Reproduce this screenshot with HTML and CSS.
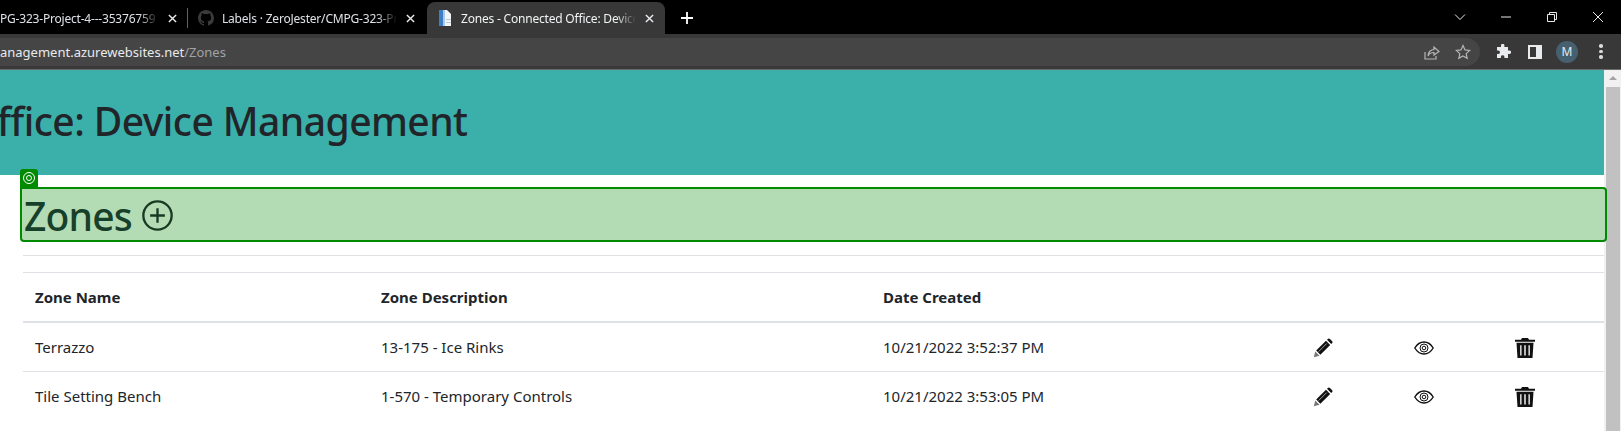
FILE: index.html
```html
<!DOCTYPE html>
<html lang="en">
<head>
  <meta charset="UTF-8" />
  <meta name="viewport" content="width=device-width, initial-scale=1.0" />
  <title>Zones - Connected Office: Device Management</title>
  <link rel="stylesheet" href="styles.css">
</head>
<body>
  <div class="tabstrip">
    <div class="tab tab-first">
      <span class="tab-title">PG-323-Project-4---35376759</span>
      <svg class="tab-x" viewBox="0 0 10 10"><path d="M1 1l8 8M9 1l-8 8"/></svg>
    </div>
    <div class="tab-sep"></div>
    <div class="tab tab-second">
      <svg class="favicon" viewBox="0 0 16 16"><path fill="#3a3a3a" d="M8 0C3.58 0 0 3.58 0 8c0 3.54 2.29 6.53 5.47 7.59.4.07.55-.17.55-.38v-1.34c-2.23.48-2.69-1.07-2.69-1.07-.36-.92-.89-1.17-.89-1.17-.73-.5.05-.49.05-.49.8.06 1.23.83 1.23.83.71 1.22 1.87.87 2.33.66.07-.52.28-.87.51-1.07-1.78-.2-3.64-.89-3.64-3.95 0-.87.31-1.59.82-2.15-.08-.2-.36-1.02.08-2.12 0 0 .67-.21 2.2.82A7.7 7.7 0 018 3.89c.68 0 1.36.09 2 .27 1.53-1.04 2.2-.82 2.2-.82.44 1.1.16 1.92.08 2.12.51.56.82 1.27.82 2.15 0 3.07-1.87 3.75-3.65 3.95.29.25.54.73.54 1.48v2.2c0 .21.15.46.55.38A8 8 0 0016 8c0-4.42-3.58-8-8-8z"/></svg>
      <span class="tab-title">Labels · ZeroJester/CMPG-323-Pr</span>
      <svg class="tab-x" viewBox="0 0 10 10"><path d="M1 1l8 8M9 1l-8 8"/></svg>
    </div>
    <div class="tab tab-active">
      <svg class="favicon" viewBox="0 0 16 16"><path fill="#f2f5f8" d="M2 0h8l4 4v12H2z"/><path fill="#3d7fc4" d="M2 0h4v16H2z"/><path fill="#a9c9e8" d="M6 0h2v16H6z"/><path fill="#c4c8cc" d="M9 9h5v1H9zM9 12h5v1H9z"/></svg>
      <span class="tab-title">Zones - Connected Office: Device</span>
      <svg class="tab-x" viewBox="0 0 10 10"><path d="M1 1l8 8M9 1l-8 8"/></svg>
    </div>
    <svg class="new-tab" viewBox="0 0 12 12"><path d="M6 0v12M0 6h12"/></svg>
    <div class="win-controls">
      <svg class="win-btn" viewBox="0 0 12 12"><path d="M1 3.500l5 5 5-5"/></svg>
      <svg class="win-btn" viewBox="0 0 12 12"><path d="M1 6h10"/></svg>
      <svg class="win-btn" viewBox="0 0 12 12"><path d="M1.500 3.500h7v7h-7zM3.500 3.500v-2h7v7h-2"/></svg>
      <svg class="win-btn" viewBox="0 0 12 12"><path d="M1 1l10 10M11 1L1 11"/></svg>
    </div>
  </div>

  <div class="toolbar">
    <div class="omnibox">
      <span class="url">anagement.azurewebsites.net<span class="url-path">/Zones</span></span>
      <svg class="omni-icon" viewBox="0 0 16 16"><path d="M1 8v7h11v-3M4 12c0-4 3-6.500 6-6.500V3l5 4.500L10 11V8.500c-3 0-5 1-6 3.500z"/></svg>
      <svg class="omni-icon" viewBox="0 0 16 16"><path d="M8 1.500l2 4.400 4.700.5-3.500 3.200 1 4.700L8 11.900l-4.200 2.400 1-4.700L1.300 6.400 6 5.900z"/></svg>
    </div>
    <svg class="tool-icon puzzle" viewBox="0 0 16 16"><path d="M6 1.500a1.700 1.700 0 013.400 0V3H13v3.500h1.300a1.800 1.800 0 010 3.600H13V14H9.400v-1.300a1.800 1.800 0 00-3.500 0V14H2v-3.900h1.200a1.800 1.800 0 000-3.600H2V3h4z"/></svg>
    <svg class="tool-icon panel" viewBox="0 0 14 14"><path fill-rule="evenodd" d="M0 0h14v14H0zM2 2v10h6V2z"/></svg>
    <div class="avatar">M</div>
    <div class="kebab"><i></i><i></i><i></i></div>
  </div>
  <div class="toolbar-edge"></div>

  <div class="viewport">
    <div class="page">
      <header class="site-header">
        <h1>ffice: Device Management</h1>
      </header>
      <main>
        <div class="highlight-wrap">
          <div class="highlight-tag">
            <svg viewBox="0 0 14 14"><circle cx="7" cy="7" r="5.500"/><circle cx="7" cy="7" r="2.500"/></svg>
          </div>
          <h2 class="highlight">Zones
            <svg class="add-icon" viewBox="0 0 16 16"><circle cx="8" cy="8" r="7.300"/><path d="M8 4.200v7.600M4.200 8h7.600"/></svg>
          </h2>
        </div>
        <hr>
        <table>
          <thead>
            <tr>
              <th class="col-name">Zone Name</th>
              <th class="col-desc">Zone Description</th>
              <th class="col-date">Date Created</th>
              <th class="col-act"></th>
              <th class="col-act"></th>
              <th></th>
            </tr>
          </thead>
          <tbody>
            <tr>
              <td>Terrazzo</td>
              <td>13-175 - Ice Rinks</td>
              <td>10/21/2022 3:52:37 PM</td>
              <td><svg class="act" viewBox="0 0 20 20"><path fill="#777" d="M.8 19.200l1.500-5.700 4.200 4.200z"/><path d="M3.200 12.600L13 2.800l4.200 4.200-9.800 9.800z"/><path d="M14 1.800l.8-.8a1.500 1.500 0 012.100 0l2.100 2.100a1.500 1.500 0 010 2.100l-.8.800z"/><path class="shine" d="M5.600 13.600l8-8"/></svg></td>
              <td><svg class="act eye" viewBox="0 0 20 14"><path class="eye-line" d="M.8 7C3 3.400 6.200 1 10 1s7 2.400 9.200 6C17 10.600 13.800 13 10 13S3 10.600.8 7z"/><circle class="eye-ring" cx="10" cy="7" r="4"/><circle class="eye-ring" cx="10" cy="7" r="1.800"/></svg></td>
              <td><svg class="act" viewBox="0 0 20 20"><path fill-rule="evenodd" d="M7 0h6l1 1.700h6v2H0v-2h6zM1.500 4.800h17L17.500 20h-15zM5.200 7.200v10.300h1.300V7.200zm4.100 0v10.300h1.400V7.200zm4.200 0v10.300h1.300V7.200z"/></svg></td>
            </tr>
            <tr>
              <td>Tile Setting Bench</td>
              <td>1-570 - Temporary Controls</td>
              <td>10/21/2022 3:53:05 PM</td>
              <td><svg class="act" viewBox="0 0 20 20"><path fill="#777" d="M.8 19.200l1.500-5.700 4.200 4.200z"/><path d="M3.200 12.600L13 2.800l4.200 4.200-9.800 9.800z"/><path d="M14 1.800l.8-.8a1.500 1.500 0 012.100 0l2.100 2.100a1.500 1.500 0 010 2.100l-.8.800z"/><path class="shine" d="M5.600 13.600l8-8"/></svg></td>
              <td><svg class="act eye" viewBox="0 0 20 14"><path class="eye-line" d="M.8 7C3 3.400 6.200 1 10 1s7 2.400 9.200 6C17 10.600 13.800 13 10 13S3 10.600.8 7z"/><circle class="eye-ring" cx="10" cy="7" r="4"/><circle class="eye-ring" cx="10" cy="7" r="1.800"/></svg></td>
              <td><svg class="act" viewBox="0 0 20 20"><path fill-rule="evenodd" d="M7 0h6l1 1.700h6v2H0v-2h6zM1.500 4.800h17L17.500 20h-15zM5.200 7.200v10.300h1.300V7.200zm4.100 0v10.300h1.400V7.200zm4.200 0v10.300h1.300V7.200z"/></svg></td>
            </tr>
          </tbody>
        </table>
      </main>
    </div>
    <div class="scrollbar">
      <div class="scroll-arrow"></div>
      <div class="scroll-thumb"></div>
    </div>
  </div>
</body>
</html>
```

FILE: styles.css
```css
* {
  box-sizing: border-box;
}
html, body {
  margin: 0;
  height: 431px;
  overflow: hidden;
}
body {
  font-family: "Noto Sans", "Open Sans", sans-serif;
  background: white;
  color: #212529;
}

/* browser chrome */
.tabstrip {
  height: 34px;
  background: black;
  display: flex;
  align-items: flex-end;
  color: #dee1e6;
  font-size: 12px;
  letter-spacing: -0.2px;
  overflow: hidden;
}
.tab {
  height: 32px;
  display: flex;
  align-items: center;
  flex: none;
}
.tab-first {
  width: 187px;
  padding-right: 10px;
}
.tab-second {
  width: 239px;
  padding: 0 12px 0 10px;
}
.tab-active {
  width: 238px;
  padding: 0 11px 0 10px;
  background: #383838;
  border-radius: 8px 8px 0 0;
  color: #f1f3f4;
}
.tab-sep {
  width: 1px;
  height: 20px;
  margin-bottom: 6px;
  background: #5f6368;
  flex: none;
}
.tab-title {
  flex: 1;
  min-width: 0;
  white-space: nowrap;
  overflow: hidden;
  -webkit-mask-image: linear-gradient(to left, transparent 0, black 20px);
  mask-image: linear-gradient(to left, transparent 0, black 20px);
}
.favicon {
  width: 16px;
  height: 16px;
  margin-right: 8px;
  flex: none;
}
.tab-x {
  width: 9px;
  height: 9px;
  margin-left: 9px;
  flex: none;
  fill: none;
  stroke: #e8eaed;
  stroke-width: 1.600;
}
.new-tab {
  width: 12px;
  height: 12px;
  margin: 0 0 10px 16px;
  flex: none;
  fill: none;
  stroke: white;
  stroke-width: 1.800;
}
.win-controls {
  margin-left: auto;
  height: 34px;
  display: flex;
  align-items: center;
  gap: 34px;
  padding-right: 17px;
}
.win-btn {
  width: 12px;
  height: 12px;
  fill: none;
  stroke: #e8e8e8;
  stroke-width: 1;
}

.toolbar {
  height: 35px;
  background: #383838;
  display: flex;
  align-items: center;
  padding-right: 16px;
}
.omnibox {
  width: 1480px;
  height: 28px;
  background: #454545;
  border-radius: 0 14px 14px 0;
  display: flex;
  align-items: center;
  padding-right: 9px;
  gap: 15px;
  flex: none;
}
.url {
  margin-right: auto;
  font-size: 13px;
  color: #e8eaed;
  white-space: nowrap;
}
.url-path {
  color: #a0a3a8;
}
.omni-icon {
  width: 16px;
  height: 16px;
  fill: none;
  stroke: #b5b5b5;
  stroke-width: 1.200;
}
.tool-icon {
  flex: none;
  fill: #e8eaed;
}
.puzzle {
  width: 16px;
  height: 16px;
  margin-left: 15px;
}
.panel {
  width: 14px;
  height: 14px;
  margin-left: 17px;
}
.avatar {
  width: 22px;
  height: 22px;
  margin-left: 14px;
  border-radius: 50%;
  background: #47606f;
  color: #e8eaed;
  font-size: 12px;
  display: flex;
  align-items: center;
  justify-content: center;
  flex: none;
}
.kebab {
  margin-left: 21px;
  display: flex;
  flex-direction: column;
  gap: 2px;
}
.kebab i {
  width: 3.500px;
  height: 3.500px;
  border-radius: 50%;
  background: #dcdcdc;
}
.toolbar-edge {
  height: 1px;
  background: #6a6a6a;
}

/* page */
.viewport {
  display: flex;
  height: 361px;
  overflow: hidden;
}
.page {
  flex: 1;
  min-width: 0;
}
.site-header {
  height: 105px;
  background: #3bafa9;
  display: flex;
  align-items: center;
  overflow: hidden;
}
.site-header h1 {
  margin: -4px 0 0 -3px;
  font-size: 39px;
  font-weight: 500;
  letter-spacing: -0.55px;
  white-space: nowrap;
  color: #212529;
}
main {
  padding: 12px 0 0 20px;
}
.highlight-wrap {
  position: relative;
  z-index: 1;
  width: 1587px;
}
.highlight-tag {
  position: absolute;
  left: 0;
  top: -18px;
  width: 18px;
  height: 18px;
  background: #008a00;
  border-radius: 3px 3px 0 0;
  display: flex;
  align-items: center;
  justify-content: center;
}
.highlight-tag svg {
  width: 14px;
  height: 14px;
  fill: none;
  stroke: white;
  stroke-width: 1;
}
.highlight {
  margin: 0;
  height: 55px;
  padding: 2px 0 0 2px;
  border: 2px solid #008a00;
  border-radius: 0 4px 4px 4px;
  background: #b4dcb4;
  color: #17402a;
  font-size: 39px;
  font-weight: 500;
  letter-spacing: -0.8px;
  line-height: 51px;
  display: flex;
  align-items: center;
  gap: 10px;
}
.add-icon {
  width: 31px;
  height: 31px;
  fill: none;
  stroke: #173a22;
  stroke-width: 1.200;
}
hr {
  margin: 13px 0 16px 3px;
  width: 1581px;
  border: 0;
  border-top: 1px solid #dfe1e5;
}
table {
  margin-left: 3px;
  width: 1581px;
  border-collapse: collapse;
  table-layout: fixed;
  font-size: 15px;
  border-top: 1px solid #dee2e6;
}
th {
  text-align: left;
  padding: 0 12px;
  height: 49px;
  font-weight: 700;
  border-bottom: 2px solid #dee2e6;
}
td {
  padding: 0 12px;
  height: 50px;
  border-bottom: 1px solid #dee2e6;
}
tbody tr:last-child td {
  height: 48px;
  border-bottom: 0;
}
.col-name {
  width: 346px;
}
.col-desc {
  width: 502px;
}
.col-date {
  width: 430px;
}
.col-act {
  width: 101px;
}
.act {
  display: block;
  width: 20px;
  height: 20px;
  margin-top: 2px;
  fill: #111;
}
.eye {
  height: 14px;
  fill: none;
}
.eye-line {
  stroke: #111;
  stroke-width: 1.400;
}
.eye-ring {
  stroke: #111;
  stroke-width: 1;
}
.shine {
  fill: none;
  stroke: #ddd;
  stroke-width: 0.700;
}

.scrollbar {
  width: 17px;
  background: #f1f1f1;
  flex: none;
  padding-left: 2px;
}
.scroll-arrow {
  height: 17px;
  position: relative;
}
.scroll-arrow::before {
  content: "";
  position: absolute;
  left: 3px;
  top: 6px;
  border-left: 4px solid transparent;
  border-right: 4px solid transparent;
  border-bottom: 4px solid #a3a3a3;
}
.scroll-thumb {
  width: 14px;
  height: 344px;
  background: #c1c1c1;
}
```
